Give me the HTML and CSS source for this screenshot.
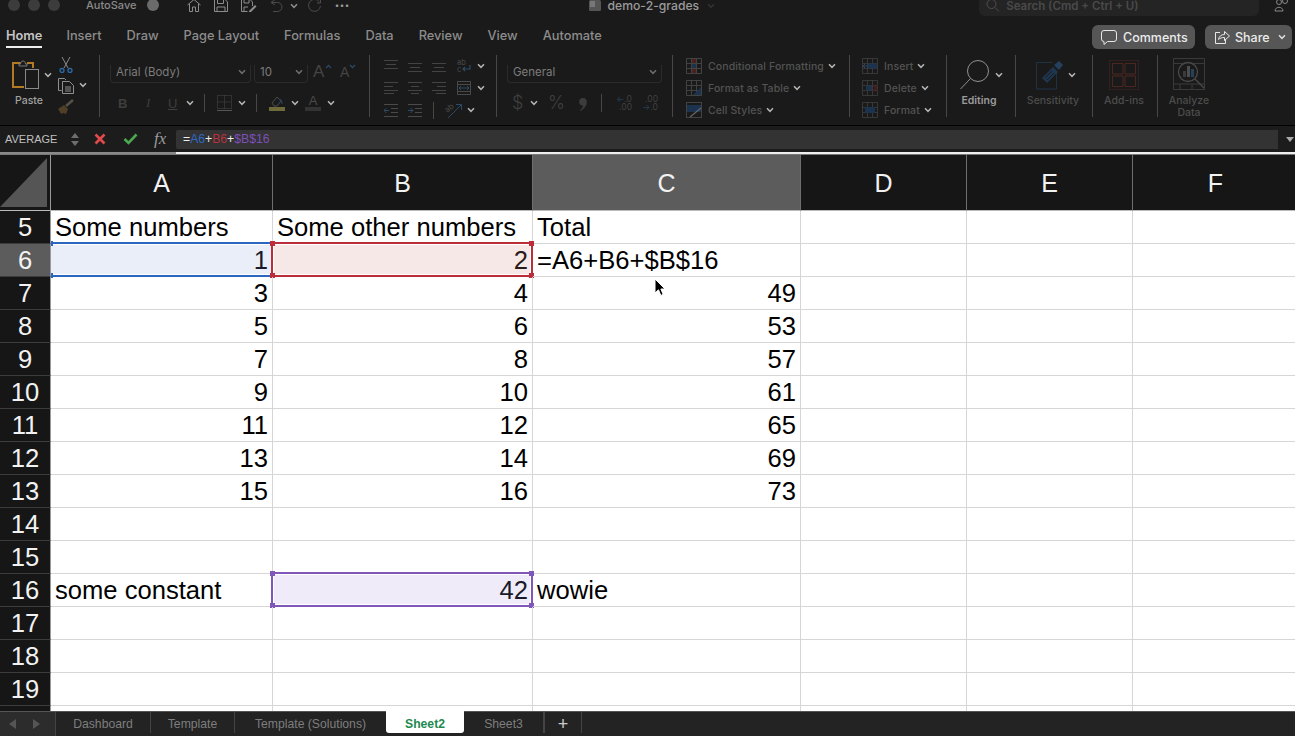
FILE: index.html
```html
<!DOCTYPE html>
<html lang="en">
<head>
<meta charset="utf-8">
<title>demo-2-grades</title>
<link rel="stylesheet" href="styles.css">
</head>
<body>
<svg class="sprite" width="0" height="0" aria-hidden="true">
  <symbol id="chev" viewBox="0 0 8 6"><path d="M1 1.2 4 4.3 7 1.2" fill="none" stroke="currentColor" stroke-width="1.5"/></symbol>
  <symbol id="a1" viewBox="0 0 14 12"><path d="M0 .5h14M2 4.5h10M0 8.5h14" fill="none" stroke="currentColor"/></symbol>
  <symbol id="a2" viewBox="0 0 14 12"><path d="M0 3.5h14M2 7.5h10M0 11.5h14" fill="none" stroke="currentColor"/></symbol>
  <symbol id="a3" viewBox="0 0 14 12"><path d="M0 .5h14M0 4.5h9M0 8.5h14M0 11.5h10" fill="none" stroke="currentColor"/></symbol>
  <symbol id="a4" viewBox="0 0 14 12"><path d="M0 .5h14M3 4.5h8M0 8.5h14M3 11.5h8" fill="none" stroke="currentColor"/></symbol>
  <symbol id="a5" viewBox="0 0 14 12"><path d="M0 .5h14M5 4.5h9M0 8.5h14M4 11.5h10" fill="none" stroke="currentColor"/></symbol>
  <symbol id="grid" viewBox="0 0 16 16"><path d="M.5.5h15v15H.5zM.5 5.5h15M.5 10.5h15M5.500 .5v15M10.500 .5v15" fill="none" stroke="currentColor"/></symbol>
</svg>
<div class="app">
  <header class="titlebar">
    <div class="lights"><i class="light"></i><i class="light"></i><i class="light"></i></div>
    <span class="autosave">AutoSave</span>
    <i class="toggle"></i>
    <div class="quick">
      <svg class="q" width="14" height="13" viewBox="0 0 14 13"><path d="M.5 6 7 .5 13.500 6M2.500 5v7.500h3V8h3v4.500h3V5" fill="none" stroke="#8c8c8c"/></svg>
      <svg class="q" width="14" height="13" viewBox="0 0 14 13"><path d="M.5 .5h10.500l2.500 2.500v9.500H.5zM3.500 .5v4h6v-4M3 12.500V8h8v4.500" fill="none" stroke="#8c8c8c"/></svg>
      <svg class="q" width="16" height="13" viewBox="0 0 16 13"><path d="M.5 .5h8.500l2.500 2.500v4M.5 .5v12h6M3 .5v3.500h5V.5M3 12V8h4" fill="none" stroke="#8c8c8c"/><path d="m8 12 6-6 1.500 1.500-6 6H8z" fill="#8c8c8c"/></svg>
      <svg class="q" width="13" height="13" viewBox="0 0 13 13"><path d="M5 .5 1 3.500l4 2.500M1.500 3.500h6a4.500 4.500 0 0 1 0 9H3" fill="none" stroke="#4c4c4c"/></svg>
      <svg class="chev q-chev"><use href="#chev"/></svg>
      <svg class="q q-redo" width="15" height="13" viewBox="0 0 15 13"><path d="M12.500 3a6 6 0 1 0 1 4M13.500 .5v3.500H10" fill="none" stroke="#4c4c4c"/></svg>
      <span class="dots">···</span>
    </div>
    <div class="doc">
      <svg width="12" height="11" viewBox="0 0 12 11"><rect width="12" height="11" rx="1.500" fill="#555"/><rect x="1" y="1" width="5" height="6" fill="#777"/></svg>
      <span class="doc-name">demo-2-grades</span>
      <svg class="chev doc-chev"><use href="#chev"/></svg>
    </div>
    <div class="search">
      <svg width="13" height="13" viewBox="0 0 13 13"><circle cx="5.500" cy="5" r="4.500" fill="none" stroke="#4f4f4f"/><path d="m9 8.500 4 4" stroke="#4f4f4f"/></svg>
      <span>Search (Cmd + Ctrl + U)</span>
    </div>
    <svg class="people" width="15" height="13" viewBox="0 0 15 13"><circle cx="5" cy="3" r="2.500" fill="none" stroke="#888"/><circle cx="11" cy="2" r="2.500" fill="none" stroke="#888"/><path d="M1 12c0-5 8-5 8 0z" fill="none" stroke="#888"/></svg>
  </header>

  <nav class="tabs">
    <a class="tab active">Home</a><a class="tab">Insert</a><a class="tab">Draw</a><a class="tab">Page Layout</a><a class="tab">Formulas</a><a class="tab">Data</a><a class="tab">Review</a><a class="tab">View</a><a class="tab">Automate</a>
    <div class="actions">
      <button class="btn btn-comments">
        <svg width="16" height="15" viewBox="0 0 16 15"><path d="M3 .5h10A2.500 2.500 0 0 1 15.500 3v6a2.500 2.500 0 0 1-2.500 2.500H6.500L3 14.500v-3A2.500 2.500 0 0 1 .5 9V3A2.500 2.500 0 0 1 3 .5z" fill="none" stroke="#e8e8e8"/></svg>
        Comments
      </button>
      <button class="btn btn-share">
        <svg width="15" height="14" viewBox="0 0 15 14"><path d="M5 2.500H.5v11h10V9" fill="none" stroke="#e8e8e8"/><path d="M3.500 9.500C4 6 6.500 4.500 9.500 4.500V1.500l5 4.500-5 4.500V7.500C7 7.500 5 8 3.500 9.500z" fill="none" stroke="#e8e8e8"/></svg>
        Share
        <svg class="chev share-chev"><use href="#chev"/></svg>
      </button>
    </div>
  </nav>

  <section class="ribbon">
    <div class="group g-clip">
      <div class="big big-paste">
        <div class="big-icon">
          <svg width="28" height="30" viewBox="0 0 28 30"><path d="M9 3H1v24h11" fill="none" stroke="#b27a22" stroke-width="2"/><path d="M15 3h6v5" fill="none" stroke="#b27a22" stroke-width="2"/><path d="M7 4h1.500c0-4 5-4 5 0H15v2H7z" fill="#1a1a1a" stroke="#777"/><rect x="13.500" y="9.500" width="13" height="19" fill="#1a1a1a" stroke="#8a8a8a"/></svg>
          <svg class="chev"><use href="#chev"/></svg>
        </div>
        <span class="label l-bright">Paste</span>
      </div>
      <div class="mini">
        <div class="line"><svg class="ic" width="16" height="16" viewBox="0 0 16 16"><path d="M4 0l6 11M12 0 6 11" stroke="#8a8a8a" fill="none"/><circle cx="4" cy="13.500" r="2" fill="none" stroke="#2a6aa8" stroke-width="1.300"/><circle cx="12" cy="13.500" r="2" fill="none" stroke="#2a6aa8" stroke-width="1.300"/></svg></div>
        <div class="line"><svg class="ic" width="16" height="16" viewBox="0 0 16 16"><path d="M3.500 12.500H.5V.5h6L8 2" fill="none" stroke="#8f8f8f"/><path d="M4.500 3.500h7l4 4v8h-11z" fill="none" stroke="#8f8f8f"/><path d="M7 9h6M7 11h6M7 13h6" stroke="#8f8f8f"/></svg><svg class="chev c-copy"><use href="#chev"/></svg></div>
        <div class="line"><svg class="ic" width="16" height="16" viewBox="0 0 16 16"><path d="M0 10l6-4 4 4-2 5-3-1-2 1-1-2z" fill="#4f3f26"/><path d="M8 7l7-6" stroke="#55504a" stroke-width="2.500"/></svg></div>
      </div>
    </div>

    <div class="group g-font">
      <div class="font-row">
        <div class="select sel-font"><span>Arial (Body)</span><svg class="chev"><use href="#chev"/></svg></div>
        <div class="select sel-size"><span>10</span><svg class="chev"><use href="#chev"/></svg></div>
        <span class="grow-a">A<svg class="chev caret up"><use href="#chev"/></svg></span>
        <span class="grow-a small-a">A<svg class="chev caret"><use href="#chev"/></svg></span>
      </div>
      <div class="font-row2">
        <b class="fmt f-b">B</b><i class="fmt f-i">I</i><span class="fmt f-u">U</span>
        <svg class="chev"><use href="#chev"/></svg>
        <i class="vsep vs-a"></i>
        <svg class="ic-borders" width="15" height="16" viewBox="0 0 15 16"><path d="M.5.500h14v13H.5zM.5 7h14M7.500.500v13" fill="none" stroke="#4a4a4a" stroke-dasharray="1 1"/><path d="M0 15.500h15" stroke="#555"/></svg>
        <svg class="chev"><use href="#chev"/></svg>
        <i class="vsep vs-b"></i>
        <span class="swatch-ic">
          <svg width="14" height="11" viewBox="0 0 14 11"><path d="M2 7l5-6 4 4-4 5H4z" fill="none" stroke="#4c4c4c"/><path d="M9 4c2-1 3 1 3 4" fill="none" stroke="#24405c" stroke-width="1.300"/></svg>
          <i class="swatch s-fill"></i>
        </span>
        <svg class="chev c-fill"><use href="#chev"/></svg>
        <span class="swatch-ic">
          <span class="a-glyph">A</span>
          <i class="swatch s-text"></i>
        </span>
        <svg class="chev c-text"><use href="#chev"/></svg>
      </div>
    </div>

    <div class="group g-align">
      <div class="line">
        <svg class="al"><use href="#a1"/></svg><svg class="al"><use href="#a2"/></svg><svg class="al"><use href="#a2"/></svg>
        <svg class="ic wrap" width="14" height="15" viewBox="0 0 14 15"><text x="0" y="6" font-size="7.500" fill="#4a4a4a" font-family="Inter">ab</text><text x="0" y="13" font-size="7.500" fill="#4a4a4a" font-family="Inter">c</text><path d="M13 6v4H6M8 8l-2 2 2 2" fill="none" stroke="#2d4b69" stroke-width="1.200"/></svg>
        <svg class="chev c-al"><use href="#chev"/></svg>
      </div>
      <div class="line">
        <svg class="al"><use href="#a3"/></svg><svg class="al"><use href="#a4"/></svg><svg class="al"><use href="#a5"/></svg>
        <svg class="ic wrap" width="14" height="14" viewBox="0 0 14 14"><path d="M.5.500h13v13H.5zM.5 3.500h13M.5 10.500h13" fill="none" stroke="#4a4a4a"/><path d="M2 7h10M4 5 2 7l2 2M10 5l2 2-2 2" fill="none" stroke="#2d4b69"/></svg>
        <svg class="chev c-al"><use href="#chev"/></svg>
      </div>
      <div class="line">
        <svg class="ic" width="14" height="13" viewBox="0 0 14 13"><path d="M0 .5h14M7 4.500h7M7 8.500h7M0 12.500h14" fill="none" stroke="#4a4a4a"/><path d="M5 6.500H0M2.500 4 0 6.500 2.500 9" fill="none" stroke="#2d4b69"/></svg>
        <svg class="ic ind2" width="14" height="13" viewBox="0 0 14 13"><path d="M0 .5h14M7 4.500h7M7 8.500h7M0 12.500h14" fill="none" stroke="#4a4a4a"/><path d="M0 6.500h5M2.500 4 5 6.500 2.500 9" fill="none" stroke="#2d4b69"/></svg>
        <i class="vsep vs-c"></i>
        <svg class="ic orient" width="17" height="17" viewBox="0 0 17 17"><text x="0" y="9" font-size="8" fill="#4a4a4a" font-family="Inter" transform="rotate(-40 4 7)">ab</text><path d="M3 16 16 3M11 2.500h5.500V8" fill="none" stroke="#2d4b69"/></svg>
        <svg class="chev c-or"><use href="#chev"/></svg>
      </div>
    </div>

    <div class="group g-num">
      <div class="select sel-num"><span>General</span><svg class="chev"><use href="#chev"/></svg></div>
      <div class="num-row">
        <span class="n-sym n-dollar">$</span>
        <svg class="chev"><use href="#chev"/></svg>
        <span class="n-sym n-pct">%</span>
        <svg class="n-comma" width="8" height="13" viewBox="0 0 8 13"><path d="M3.800 0a3.700 3.700 0 0 1 4 4C7.800 8 5 11 1.500 13L1 12c2-1.500 3-3 3-4.500A3.700 3.700 0 0 1 3.800 0z" fill="#3c3c3c"/></svg>
        <i class="vsep vs-d"></i>
        <span class="dec d-1"><em>←</em>.0<br>.00</span>
        <span class="dec d-2">.00<br><em>→</em>.0</span>
      </div>
    </div>

    <div class="group g-styles">
      <div class="line">
        <svg class="gi" viewBox="0 0 16 16"><rect x="5" y="1" width="6" height="4" fill="#4a1f1c"/><rect x="5" y="6" width="6" height="4" fill="#1c3350"/><rect x="5" y="11" width="6" height="4" fill="#4a1f1c"/><use href="#grid" color="#424242"/></svg>
        <span class="rtext">Conditional Formatting</span><svg class="chev"><use href="#chev"/></svg>
      </div>
      <div class="line">
        <svg class="gi" viewBox="0 0 16 16"><use href="#grid" color="#424242"/><path d="M7 15 15 7v8z" fill="#1c3350"/></svg>
        <span class="rtext">Format as Table</span><svg class="chev"><use href="#chev"/></svg>
      </div>
      <div class="line">
        <svg class="gi" viewBox="0 0 16 16"><rect x=".5" y=".5" width="15" height="15" fill="none" stroke="#424242"/><rect x="1" y="3" width="14" height="7" fill="#1c3350"/><path d="M4 15 15 6" stroke="#666" stroke-width="1.200"/></svg>
        <span class="rtext">Cell Styles</span><svg class="chev"><use href="#chev"/></svg>
      </div>
    </div>

    <div class="group g-cells">
      <div class="line">
        <svg class="gi" viewBox="0 0 16 16"><use href="#grid" color="#383838"/><rect x="6" y="5.500" width="9" height="5" fill="#1c3350"/><path d="M6 8H1M3 6 1 8l2 2" fill="none" stroke="#2d4b69"/></svg>
        <span class="rtext">Insert</span><svg class="chev"><use href="#chev"/></svg>
      </div>
      <div class="line">
        <svg class="gi" viewBox="0 0 16 16"><use href="#grid" color="#383838"/><rect x="4" y="5.500" width="6" height="5" fill="#1c3350"/><path d="m11 5 5 6M16 5l-5 6" stroke="#4a1f1c" stroke-width="1.200"/></svg>
        <span class="rtext">Delete</span><svg class="chev"><use href="#chev"/></svg>
      </div>
      <div class="line">
        <svg class="gi" viewBox="0 0 16 16"><use href="#grid" color="#383838"/><rect x="3" y="5" width="10" height="6" fill="#1c3350"/></svg>
        <span class="rtext">Format</span><svg class="chev"><use href="#chev"/></svg>
      </div>
    </div>

    <div class="group g-edit">
      <div class="big big-edit">
        <div class="big-icon">
          <svg width="29" height="30" viewBox="0 0 29 30"><circle cx="18" cy="11" r="10.500" fill="none" stroke="#909090"/><path d="M10.500 18.500.5 29" stroke="#909090"/></svg>
          <svg class="chev"><use href="#chev"/></svg>
        </div>
        <span class="label l-mid">Editing</span>
      </div>
    </div>

    <div class="group g-sens">
      <div class="big big-sens">
        <div class="big-icon">
          <svg width="28" height="30" viewBox="0 0 28 30"><path d="M.5 2.500h16M.5 2.500V29h20V12" fill="none" stroke="#1e3246"/><path d="m6 18 11-11 5 5-11 11z" fill="#1e3650"/><path d="m9 18 7-7M11 20l7-7" stroke="#1a1a1a"/><path d="m18 5 5-4 4 4-4 5z" fill="#24405c"/></svg>
          <svg class="chev"><use href="#chev"/></svg>
        </div>
        <span class="label l-dim">Sensitivity</span>
      </div>
    </div>

    <div class="group g-add">
      <div class="big big-add">
        <div class="big-icon">
          <svg width="30" height="30" viewBox="0 0 30 30"><rect x=".5" y=".5" width="29" height="29" fill="none" stroke="#33201e"/><path d="M3.500 3.500h10.500v10.500H3.500zM16 3.500h10.500v10.500H16zM3.500 16h10.500v10.500H3.500zM16 16h10.500v10.500H16z" fill="none" stroke="#4e2620"/></svg>
        </div>
        <span class="label l-dim">Add-ins</span>
      </div>
    </div>

    <div class="group g-an">
      <div class="big big-an">
        <div class="big-icon">
          <svg width="32" height="32" viewBox="0 0 32 32"><path d="M.5.500h31v31H.5zM.5 5.500h31M.5 26h31M7 26v5.500M19 26v5.500" fill="none" stroke="#3a3a3a"/><circle cx="15" cy="14" r="9.500" fill="#1a1a1a" stroke="#4a4a4a" stroke-width="1.300"/><rect x="10" y="13" width="3" height="6" fill="#3a3a3a"/><rect x="14" y="8" width="3" height="11" fill="#4d4d4d"/><rect x="18" y="11" width="3" height="8" fill="#24405c"/><path d="m22 21 9 9" stroke="#4a4a4a" stroke-width="1.300"/></svg>
        </div>
        <span class="label l-dim">Analyze<br>Data</span>
      </div>
    </div>
  </section>

  <section class="formula">
    <span class="namebox">AVERAGE</span>
    <span class="stepper"><i class="tri tri-up"></i><i class="tri tri-down"></i></span>
    <svg class="f-x" width="12" height="12" viewBox="0 0 12 12"><path d="M1.500 1.500l9 9M10.500 1.500l-9 9" stroke="#e2494b" stroke-width="2.600"/></svg>
    <svg class="f-ok" width="15" height="12" viewBox="0 0 15 12"><path d="M1.500 6l4 4 8-8.500" fill="none" stroke="#4aa94f" stroke-width="2.600"/></svg>
    <span class="fx">fx</span>
    <div class="f-input"><span class="f-eq">=</span><span class="r-blue">A6</span><span class="f-eq">+</span><span class="r-red">B6</span><span class="f-eq">+</span><span class="r-purple">$B$16</span></div>
    <i class="tri tri-down f-arrow"></i>
  </section>

  <main class="sheet">
    <div class="sheet-top"></div>
    <div class="sheet-grid">
      <div class="corner"><svg width="48" height="52" viewBox="0 0 48 52"><path d="M47 3v49H0z" fill="#555"/></svg></div>
      <div class="col-h">A</div><div class="col-h">B</div><div class="col-h col-on">C</div><div class="col-h">D</div><div class="col-h">E</div><div class="col-h col-last">F</div>

      <div class="row-h">5</div><div class="cell">Some numbers</div><div class="cell">Some other numbers</div><div class="cell">Total</div><div class="cell"></div><div class="cell"></div><div class="cell"></div>

      <div class="row-h row-on">6</div>
      <div class="cell num sel-blue">1<span class="ref ref-blue"><i class="h tl"></i><i class="h bl"></i></span></div>
      <div class="cell num sel-red">2<span class="ref ref-red"><i class="h tl"></i><i class="h tr"></i><i class="h bl"></i><i class="h br"></i></span></div>
      <div class="cell">=A6+B6+$B$16</div><div class="cell"></div><div class="cell"></div><div class="cell"></div>

      <div class="row-h">7</div><div class="cell num">3</div><div class="cell num">4</div><div class="cell num">49</div><div class="cell"></div><div class="cell"></div><div class="cell"></div>
      <div class="row-h">8</div><div class="cell num">5</div><div class="cell num">6</div><div class="cell num">53</div><div class="cell"></div><div class="cell"></div><div class="cell"></div>
      <div class="row-h">9</div><div class="cell num">7</div><div class="cell num">8</div><div class="cell num">57</div><div class="cell"></div><div class="cell"></div><div class="cell"></div>
      <div class="row-h">10</div><div class="cell num">9</div><div class="cell num">10</div><div class="cell num">61</div><div class="cell"></div><div class="cell"></div><div class="cell"></div>
      <div class="row-h">11</div><div class="cell num">11</div><div class="cell num">12</div><div class="cell num">65</div><div class="cell"></div><div class="cell"></div><div class="cell"></div>
      <div class="row-h">12</div><div class="cell num">13</div><div class="cell num">14</div><div class="cell num">69</div><div class="cell"></div><div class="cell"></div><div class="cell"></div>
      <div class="row-h">13</div><div class="cell num">15</div><div class="cell num">16</div><div class="cell num">73</div><div class="cell"></div><div class="cell"></div><div class="cell"></div>
      <div class="row-h">14</div><div class="cell"></div><div class="cell"></div><div class="cell"></div><div class="cell"></div><div class="cell"></div><div class="cell"></div>
      <div class="row-h">15</div><div class="cell"></div><div class="cell"></div><div class="cell"></div><div class="cell"></div><div class="cell"></div><div class="cell"></div>

      <div class="row-h">16</div><div class="cell">some constant</div>
      <div class="cell num sel-purple">42<span class="ref ref-purple"><i class="h tl"></i><i class="h tr"></i><i class="h bl"></i><i class="h br"></i></span></div>
      <div class="cell">wowie</div><div class="cell"></div><div class="cell"></div><div class="cell"></div>

      <div class="row-h">17</div><div class="cell"></div><div class="cell"></div><div class="cell"></div><div class="cell"></div><div class="cell"></div><div class="cell"></div>
      <div class="row-h">18</div><div class="cell"></div><div class="cell"></div><div class="cell"></div><div class="cell"></div><div class="cell"></div><div class="cell"></div>
      <div class="row-h">19</div><div class="cell"></div><div class="cell"></div><div class="cell"></div><div class="cell"></div><div class="cell"></div><div class="cell"></div>
      <div class="row-h"></div><div class="cell"></div><div class="cell"></div><div class="cell"></div><div class="cell"></div><div class="cell"></div><div class="cell"></div>
    </div>
    <svg class="cursor" width="12" height="19" viewBox="0 0 12 19"><path d="M1 1v14l3.500-3.200 2.300 5.600 2.400-1-2.300-5.400H11z" fill="#000" stroke="#fff"/></svg>
  </main>

  <footer class="sheet-tabs">
    <div class="nav"><i class="tri-l"></i><i class="tri-r"></i></div>
    <a class="st st-1">Dashboard</a>
    <a class="st st-2">Template</a>
    <a class="st st-3">Template (Solutions)</a>
    <a class="st st-4 st-on">Sheet2</a>
    <a class="st st-5">Sheet3</a>
    <a class="st st-add">+</a>
  </footer>
</div>
</body>
</html>
```
FILE: styles.css
```css
* { box-sizing: border-box; }
html, body { margin: 0; height: 100%; overflow: hidden; background: #1a1a1a; }
body { font-family: Inter, "Noto Sans", sans-serif; color: #999; }
.sprite { position: absolute; }
.app { width: 1295px; height: 736px; display: flex; flex-direction: column; overflow: hidden; }
i { display: block; font-style: normal; }
svg { display: block; flex: none; }
.chev { width: 8px; height: 6px; color: #b4b4b4; flex: none; }

/* title bar */
.titlebar { height: 17px; flex: none; display: flex; align-items: flex-start; position: relative; }
.lights { display: flex; gap: 8px; margin: -1px 0 0 8px; }
.light { width: 12px; height: 12px; border-radius: 50%; background: #3c3c3c; }
.autosave { margin-left: 26px; font-size: 11px; line-height: 11px; color: #8a8a8a; font-weight: 500; white-space: nowrap; }
.toggle { width: 12px; height: 12px; margin: -1px 0 0 11px; border-radius: 50%; background: #6b6b6b; }
.quick { display: flex; align-items: center; height: 11px; margin-left: 28px; gap: 13px; }
.q { margin-top: -1px; }
.q-chev { margin-left: -6px; color: #8c8c8c; }
.q-redo { margin-left: -4px; }
.dots { font-size: 15px; line-height: 11px; color: #9a9a9a; font-weight: 700; margin-left: -1px; }
.doc { display: flex; align-items: center; height: 11px; margin-left: 240px; gap: 6px; }
.doc-name { font-size: 12.2px; line-height: 11px; color: #9a9a9a; font-weight: 500; white-space: nowrap; }
.doc-chev { color: #333; margin-left: 2px; }
.search { width: 280px; height: 16px; margin-left: 264px; margin-top: 0; background: #242424; border-radius: 0 0 6px 6px; display: flex; align-items: center; padding: 0 0 5px 7px; gap: 7px; font-size: 11.5px; font-weight: 600; color: #4a4a4a; white-space: nowrap; }
.people { margin: -1px 0 0 15px; }

/* tabs */
.tabs { height: 33px; flex: none; display: flex; align-items: flex-start; padding-left: 6px; gap: 25px; }
.tab { height: 31px; font-size: 12.8px; font-weight: 500; line-height: 37px; color: #8c8c8c; white-space: nowrap; }
.tab.active { color: #c4c4c4; font-weight: 600; border-bottom: 2.500px solid #eee; margin-right: -1px; }
.actions { display: flex; gap: 10px; margin-left: auto; padding: 8px 3px 0 0; }
.btn { height: 24px; border: 0; border-radius: 6px; background: #565656; color: #ebebeb; font: 500 12.5px Inter, sans-serif; display: flex; align-items: center; padding: 0; }
.btn-comments { width: 103px; padding-left: 9px; gap: 6px; }
.btn-share { width: 87px; padding-left: 10px; gap: 5px; }
.share-chev { margin-left: 3px; color: #ddd; }

/* ribbon */
.ribbon { height: 76px; flex: none; display: flex; align-items: flex-start; padding-top: 5px; border-bottom: 1px solid #000; }
.group { height: 62px; flex: none; border-right: 1px solid #474747; font-size: 11px; }
.g-clip { width: 100px; display: flex; }
.g-font { width: 270px; padding: 10px 0 0 10px; }
.g-align { width: 127px; padding-left: 14px; }
.g-num { width: 176px; padding: 10px 0 0 10px; }
.g-styles { width: 177px; padding-left: 13px; }
.g-cells { width: 97px; padding-left: 12px; }
.g-edit { width: 69px; }
.g-sens { width: 77px; }
.g-add { width: 65px; }
.g-an { flex: 1; border-right: 0; }

.line { height: 22px; display: flex; align-items: center; }
.big { padding-top: 5px; }
.big-icon { height: 35px; display: flex; align-items: flex-start; }
.big-icon .chev { margin-top: 12px; }
.big-paste { width: 58px; }
.big-paste .big-icon { padding-left: 12px; gap: 4px; }
.big-edit { width: 64px; }
.big-edit .big-icon { padding-left: 13px; gap: 6px; }
.big-sens { width: 74px; }
.big-sens .big-icon { padding-left: 20px; gap: 4px; }
.big-add { width: 62px; }
.big-add .big-icon { padding-left: 16px; }
.big-an { width: 62px; }
.big-an .big-icon { padding-left: 15px; margin-top: -2px; height: 37px; }
.label { display: block; text-align: center; line-height: 12px; font-size: 10.5px; font-weight: 500; }
.l-bright { color: #a2a2a2; }
.l-mid { color: #9a9a9a; font-weight: 600; }
.l-dim { color: #4d4d4d; }
.mini { display: flex; flex-direction: column; margin-top: -1px; }
.c-copy { margin-left: 5px; margin-top: -2px; }

.font-row { display: flex; align-items: center; height: 18px; }
.select { height: 18px; display: flex; align-items: center; justify-content: space-between; border: 1px solid #2b2b2b; border-top: 0; border-radius: 0 0 4px 4px; font-size: 11.5px; color: #7c7c7c; padding: 0 4px 3px 5px; }
.sel-font { width: 141px; }
.sel-size { width: 54px; margin-left: 3px; }
.select .chev { color: #6e6e6e; }
.grow-a { font-size: 17px; line-height: 18px; color: #444; position: relative; margin: -4px 0 0 5px; width: 24px; font-family: "Liberation Sans", sans-serif; }
.small-a { font-size: 14px; margin-left: 1px; width: 20px; padding-left: 2px; }
.caret { position: absolute; top: 1px; left: 12px; width: 7px; height: 5px; color: #2d4b69; }
.caret.up { transform: scaleY(-1); }
.small-a .caret { left: 11px; }
.font-row2 { display: flex; align-items: center; height: 20px; margin-top: 10px; padding-left: 8px; }
.fmt { width: 25px; font-size: 13px; color: #3e3e3e; font-family: "Liberation Sans", sans-serif; }
.f-i { font-family: "Liberation Serif", serif; font-style: italic; width: 25px; padding-left: 3px; }
.f-u { text-decoration: underline; width: 18px; }
.vsep { width: 1px; height: 18px; background: #474747; flex: none; }
.vs-a { margin: 0 12px 0 10px; }
.ic-borders { margin-right: 6px; }
.vs-b { margin: 0 12px 0 10px; }
.swatch-ic { width: 16px; display: flex; flex-direction: column; align-items: center; }
.swatch { width: 16px; height: 4px; }
.s-fill { background: #6e6a3a; }
.s-text { background: #333; }
.a-glyph { font-size: 13px; line-height: 12px; color: #4a4a4a; font-family: "Liberation Sans", sans-serif; }
.c-fill { margin: 0 6px 0 6px; }
.c-text { margin-left: 6px; }

.al { width: 14px; height: 12px; color: #444; margin-right: 10px; }
.wrap { margin-left: 1px; }
.c-al { margin-left: 6px; }
.ind2 { margin-left: 10px; }
.vs-c { margin: 0 11px; height: 17px; }
.c-or { margin-left: 5px; }

.sel-num { width: 155px; }
.num-row { display: flex; align-items: center; height: 20px; margin-top: 10px; padding-left: 5px; }
.n-sym { color: #404040; font-size: 18px; line-height: 20px; font-weight: 300; }
.n-dollar { width: 18px; }
.n-pct { margin-left: 10px; width: 28px; }
.n-comma { margin: 2px 14px 0 3px; }
.vs-d { margin: 0 14px 0 0; }
.dec { font-size: 8.500px; line-height: 8px; color: #404040; width: 16px; text-align: right; white-space: nowrap; }
.dec em { font-style: normal; color: #24405c; }
.d-2 { margin-left: 10px; }

.gi { width: 16px; height: 16px; margin-right: 6px; }
.rtext { font-size: 10.5px; font-weight: 500; color: #535353; white-space: nowrap; margin-right: 4px; letter-spacing: .1px; }

/* formula bar */
.formula { height: 26px; flex: none; display: flex; align-items: center; background: #1c1c1c; }
.namebox { width: 71px; padding-left: 5px; font-size: 11px; color: #c0c0c0; font-family: "Liberation Sans", sans-serif; }
.stepper { display: flex; flex-direction: column; gap: 3px; width: 23px; }
.tri { width: 0; height: 0; border-left: 4px solid transparent; border-right: 4px solid transparent; }
.tri-up { border-bottom: 5px solid #6e6e6e; }
.tri-down { border-top: 5px solid #6e6e6e; }
.f-x { margin-right: 17px; }
.f-ok { margin-right: 15px; }
.fx { width: 24px; font: italic 17px "Liberation Serif", serif; color: #9a9a9a; margin-left: 1px; }
.f-input { width: 1102px; margin-left: -2px; height: 19px; background: #333; display: flex; align-items: center; padding-left: 7px; font-size: 12.200px; font-family: "Liberation Sans", sans-serif; border-radius: 2px 0 0 2px; }
.f-eq { color: #eee; }
.r-blue { color: #2f68c2; }
.r-red { color: #b8323e; }
.r-purple { color: #7d4fb8; }
.f-arrow { margin-left: 8px; border-top-color: #aaa; }

/* sheet */
.sheet { height: 559px; flex: none; position: relative; overflow: hidden; background: #fff; }
.sheet-top { height: 3px; background: linear-gradient(90deg, #8a8a8a 176px, #eee 176px); border-bottom: 1px solid #777; }
.sheet-grid { display: grid; grid-template-columns: 51px 222px 260px 268px 166px 166px 165px; grid-template-rows: 56px repeat(15, 33px) 6px; font-family: "Liberation Sans", sans-serif; font-size: 25.6px; }
.corner { background: #161616; border-right: 1px solid #9a9a9a; border-bottom: 1px solid #bbb; }
.col-h { background: #161616; color: #f2f2f2; font-size: 25px; display: flex; align-items: center; justify-content: center; border-right: 1px solid #6e6e6e; border-bottom: 1px solid #bbb; padding-top: 2px; }
.col-on { background: #5c5c5c; }
.col-last { border-right: 0; }
.row-h { background: #161616; color: #f2f2f2; border-right: 1px solid #9a9a9a; border-bottom: 1px solid #3c3c3c; display: flex; align-items: center; justify-content: center; line-height: 32px; }
.row-on { background: #5c5c5c; }
.cell { position: relative; border-right: 1px solid #d6d6d6; border-bottom: 1px solid #d6d6d6; color: #000; padding: 0 4px; line-height: 32px; white-space: nowrap; }
.num { text-align: right; }
.sel-blue { background: #e9eef8; color: #1a1a2a; }
.sel-red { background: #f7e8e8; color: #2a1a1a; }
.sel-purple { background: #f0ebf8; color: #1a1a2a; }
.ref { position: absolute; top: -2px; bottom: -1px; left: -2px; right: -1px; border: 2px solid; box-shadow: inset 0 0 0 1px #fff; }
.ref-blue { left: 0; right: 2px; color: #2a66bf; border-left: 0; border-right: 0; box-shadow: inset 0 1px #fff, inset 0 -1px #fff; }
.ref-red { color: #bb2d3b; }
.ref-purple { color: #7e57b8; }
.h { position: absolute; width: 5px; height: 5px; background: currentColor; }
.tl { left: -3px; top: -3px; }
.tr { right: -3px; top: -3px; }
.bl { left: -3px; bottom: -3px; }
.br { right: -3px; bottom: -3px; }
.ref-blue .tl, .ref-blue .bl { left: 0; width: 2px; }
.cursor { position: absolute; left: 654px; top: 126px; }

/* sheet tabs */
.sheet-tabs { height: 25px; flex: none; display: flex; align-items: stretch; background: #232323; border-top: 1px solid #555; font: 12.200px "Liberation Sans", sans-serif; }
.nav { width: 56px; background: #2c2c2c; border-right: 1px solid #444; display: flex; align-items: center; gap: 17px; padding-left: 9px; }
.tri-l, .tri-r { width: 0; height: 0; border-top: 5px solid transparent; border-bottom: 5px solid transparent; }
.tri-l { border-right: 7px solid #555; }
.tri-r { border-left: 7px solid #555; }
.st { display: flex; align-items: center; justify-content: center; color: #7e7e7e; border-right: 1px solid #444; margin-bottom: 3px; padding-top: 3px; }
.st-1 { width: 95px; }
.st-2 { width: 84px; }
.st-3 { width: 151px; border-right: 0; }
.st-4 { width: 78px; }
.st-5 { width: 80px; }
.st-add { width: 38px; color: #ccc; font-size: 18px; font-weight: 400; border-left: 1px solid #444; }
.st-on { background: #fff; color: #1e8a50; font-weight: 700; border-right: 0; border-radius: 0 0 3px 3px; margin-top: -1px; }
```
